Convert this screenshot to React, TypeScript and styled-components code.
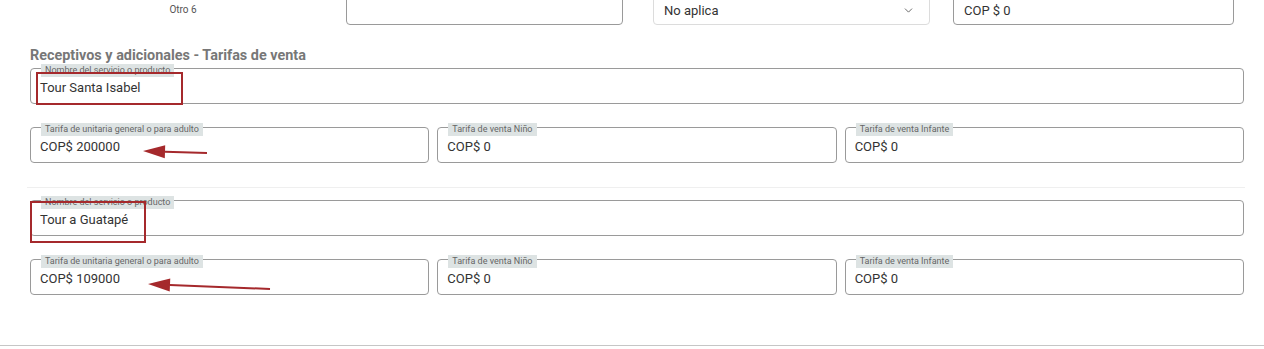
import * as React from 'react';
import styled, { createGlobalStyle } from 'styled-components';
import { ChevronDown } from 'lucide-react';

const GlobalStyle = createGlobalStyle`
  html, body {
    margin: 0;
    padding: 0;
    background: #fff;
    overflow: hidden;
  }
  body {
    font-family: Roboto, 'Liberation Sans', sans-serif;
    color: #333;
  }
`;

type Product = {
  name: string;
  adult: string;
  child: string;
  infant: string;
  nameMark: { left: number; top: number; width: number; height: number };
  arrow: { x1: number; y1: number; x2: number; y2: number };
};

const products: Product[] = [
  {
    name: 'Tour Santa Isabel',
    adult: 'COP$ 200000',
    child: 'COP$ 0',
    infant: 'COP$ 0',
    nameMark: { left: 5, top: 3, width: 147, height: 33 },
    arrow: { x1: 176, y1: 25, x2: 112, y2: 23 },
  },
  {
    name: 'Tour a Guatapé',
    adult: 'COP$ 109000',
    child: 'COP$ 0',
    infant: 'COP$ 0',
    nameMark: { left: -1, top: 0, width: 116, height: 42 },
    arrow: { x1: 239, y1: 29, x2: 117, y2: 24 },
  },
];

function Arrow({ x1, y1, x2, y2 }: Product['arrow']) {
  const angle = Math.atan2(y2 - y1, x2 - x1);
  const len = 22;
  const half = 6.5;
  const bx = x2 - Math.cos(angle) * len;
  const by = y2 - Math.sin(angle) * len;
  const px = -Math.sin(angle) * half;
  const py = Math.cos(angle) * half;
  return (
    <ArrowSvg width={300} height={60}>
      <line x1={x1} y1={y1} x2={bx} y2={by} stroke="#a5292c" strokeWidth={2} />
      <polygon
        points={`${x2},${y2} ${bx + px},${by + py} ${bx - px},${by - py}`}
        fill="#a5292c"
      />
    </ArrowSvg>
  );
}

function ProductBlock({ p }: { p: Product }) {
  return (
    <Block>
      <Field>
        <Tag>Nombre del servicio o producto</Tag>
        <Value>{p.name}</Value>
        <Mark style={{ ...p.nameMark }} />
      </Field>
      <PriceRow>
        <Field>
          <Tag>Tarifa de unitaria general o para adulto</Tag>
          <Value>{p.adult}</Value>
          <Arrow {...p.arrow} />
        </Field>
        <Field>
          <Tag>Tarifa de venta Niño</Tag>
          <Value>{p.child}</Value>
        </Field>
        <Field>
          <Tag>Tarifa de venta Infante</Tag>
          <Value>{p.infant}</Value>
        </Field>
      </PriceRow>
    </Block>
  );
}

export default function App() {
  return (
    <Page>
      <GlobalStyle />
      <TopRow>
        <RowLabel>Otro 6</RowLabel>
        <Control $width={277} />
        <Control $width={277} $soft>
          <span>No aplica</span>
          <ChevronDown size={13} strokeWidth={1.6} color="#555" />
        </Control>
        <Control $width={281}>
          <span>COP $ 0</span>
        </Control>
      </TopRow>

      <Section>
        <Heading>Receptivos y adicionales - Tarifas de venta</Heading>
        <ProductBlock p={products[0]} />
        <Divider />
        <ProductBlock p={products[1]} />
      </Section>

      <Footer />
    </Page>
  );
}

const Page = styled.div`
  width: 1264px;
  height: 349px;
  overflow: hidden;
`;

const TopRow = styled.div`
  display: grid;
  grid-template-columns: 316px 307px 300px 1fr;
  align-items: start;
  margin-top: -11px;
  padding-left: 30px;
  height: 36px;
`;

const RowLabel = styled.div`
  width: 306px;
  padding-top: 15px;
  text-align: center;
  font-size: 10px;
  color: #555;
`;

const Control = styled.div<{ $width: number; $soft?: boolean }>`
  box-sizing: border-box;
  width: ${(p) => p.$width}px;
  height: 36px;
  display: flex;
  align-items: center;
  justify-content: space-between;
  padding: 7px 14px 0 10px;
  border: 1px solid ${(p) => (p.$soft ? '#dcdcdc' : '#9a9a9a')};
  border-radius: 4px;
  font-size: 13px;
  color: #333;
`;

const Section = styled.div`
  padding: 0 20px 0 30px;
`;

const Heading = styled.h3`
  margin: 23px 0 4px;
  font-size: 14.4px;
  line-height: 16px;
  font-weight: 700;
  color: #777;
`;

const Block = styled.div`
  display: flex;
  flex-direction: column;
  gap: 23px;
`;

const PriceRow = styled.div`
  display: grid;
  grid-template-columns: repeat(3, 1fr);
  gap: 8px;
`;

const Field = styled.div`
  position: relative;
  box-sizing: border-box;
  height: 36px;
  border: 1px solid #9a9a9a;
  border-radius: 4px;
  padding: 11px 9px 0;
`;

const Tag = styled.span`
  position: absolute;
  top: -5px;
  left: 10px;
  padding: 0 4px;
  height: 13px;
  line-height: 13px;
  font-size: 9px;
  color: #666;
  background: #dde3e3;
  white-space: nowrap;
`;

const Value = styled.div`
  font-size: 13px;
  line-height: 16px;
  color: #333;
`;

const Mark = styled.div`
  position: absolute;
  box-sizing: border-box;
  border: 2px solid #a5292c;
  pointer-events: none;
`;

const ArrowSvg = styled.svg`
  position: absolute;
  left: 0;
  top: 0;
  overflow: visible;
  pointer-events: none;
`;

const Divider = styled.div`
  height: 1px;
  margin: 24px -1px 12px -3px;
  background: #efefef;
`;

const Footer = styled.div`
  margin-top: 50px;
  height: 1px;
  background: #c6c6c6;
`;
